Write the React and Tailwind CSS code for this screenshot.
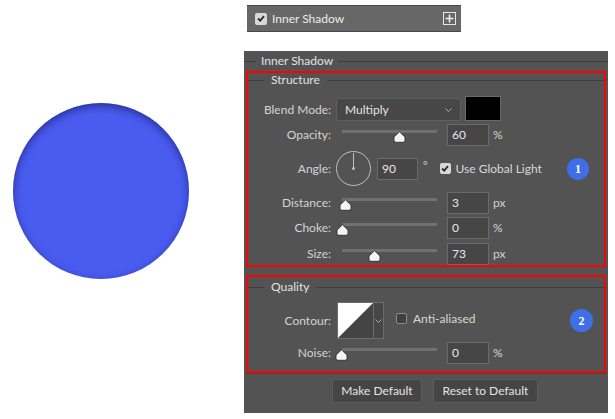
import React from 'react';

const FONT = { fontFamily: 'Lato, "Noto Sans", sans-serif' };

function Legend({ text, lead = 'w-[12px]', pad = 'px-[5px]' }) {
  return (
    <div className="flex items-center h-[14px]">
      <div className={`${lead} h-px bg-[#3d3d3d]`} />
      <span className={`${pad} text-[12px] leading-[14px] text-[#e2e2e2]`}>{text}</span>
      <div className="flex-1 h-px bg-[#3d3d3d]" />
    </div>
  );
}

function Label({ children }) {
  return (
    <div className="w-[83px] shrink-0 text-right text-[12px] leading-[14px] text-[#d4d4d4]">{children}</div>
  );
}

function Thumb() {
  return (
    <svg width="13" height="12" viewBox="0 0 13 12">
      <path d="M6.5 0.8 L12 6 L12 9.5 Q12 11.3 10 11.3 L3 11.3 Q1 11.3 1 9.5 L1 6 Z" fill="#f4f4f4" stroke="#2e2e2e" strokeWidth="0.9" />
    </svg>
  );
}

function Slider({ left }) {
  return (
    <div className="relative w-[107px] h-[22px] shrink-0">
      <div className="absolute left-[6px] top-[6px] w-[95px] h-[3px] bg-[#707070]" />
      <div className="absolute top-[7px]" style={{ left }}>
        <Thumb />
      </div>
    </div>
  );
}

function NumInput({ value, w = 'w-[42px]' }) {
  return (
    <div className={`${w} h-[22px] shrink-0 bg-[#464646] border border-[#6a6a6a] px-[4px] text-[12px] leading-[20px] text-[#e8e8e8]`}>
      {value}
    </div>
  );
}

function SliderRow({ label, value, unit, left, mt }) {
  return (
    <div className={`flex items-center h-[22px] ${mt}`}>
      <Label>{label}</Label>
      <div className="ml-[5px]">
        <Slider left={left} />
      </div>
      <div className="ml-[4px]">
        <NumInput value={value} />
      </div>
      <span className="ml-[4px] text-[12px] text-[#d4d4d4]">{unit}</span>
    </div>
  );
}

function Check({ checked, size = 'w-[11px] h-[11px]' }) {
  if (!checked) {
    return <div className={`${size} shrink-0 rounded-[2px] bg-[#3f3f3f] border border-[#8c8c8c]`} />;
  }
  return (
    <div className={`${size} shrink-0 rounded-[2px] bg-[#d8d8d8] flex items-center justify-center`}>
      <svg width="8" height="7" viewBox="0 0 8 7">
        <path d="M1 3.5 L3.2 5.6 L7 1.2" fill="none" stroke="#2a2a2a" strokeWidth="1.8" />
      </svg>
    </div>
  );
}

function Chevron() {
  return (
    <svg width="7" height="4" viewBox="0 0 7 4">
      <path d="M0.5 0.5 L3.5 3.5 L6.5 0.5" fill="none" stroke="#b0b0b0" strokeWidth="1" />
    </svg>
  );
}

function Badge({ n, size = 'w-[22px] h-[22px]', mr }) {
  return (
    <div className={`${size} ${mr} shrink-0 rounded-full bg-[#3f6ee9] flex items-center justify-center text-white text-[12px] font-bold`} style={{ fontFamily: '"Liberation Serif", serif' }}>
      {n}
    </div>
  );
}

export default function App() {
  return (
    <div className="w-[615px] h-[419px] bg-white flex overflow-hidden" style={FONT}>
      {/* preview */}
      <div className="w-[244px] shrink-0 pl-[13px] pt-[103px]">
        <div className="w-[176px] h-[176px] rounded-full bg-[#4a5cf0] shadow-[inset_0_3px_9px_rgba(10,15,80,0.55)]" />
      </div>

      {/* layer style panel */}
      <div className="flex flex-col pt-[5px]">
        <div className="ml-[3px] w-[214px] h-[27px] bg-[#676767] border-t border-b border-[#484848] flex items-center">
          <div className="ml-[8px]">
            <Check checked size="w-[12px] h-[12px]" />
          </div>
          <span className="ml-[5px] text-[12px] text-[#ececec]">Inner Shadow</span>
          <div className="ml-auto mr-[5px] w-[13px] h-[13px] border border-[#e6e6e6] flex items-center justify-center">
            <svg width="9" height="9" viewBox="0 0 9 9">
              <path d="M4.5 0.5 V8.5 M0.5 4.5 H8.5" stroke="#f0f0f0" strokeWidth="1.6" />
            </svg>
          </div>
        </div>

        <div className="mt-[19px] w-[364px] h-[362px] bg-[#535353] flex flex-col">
          <div className="mt-[3px]">
            <Legend text="Inner Shadow" />
          </div>

          {/* Structure */}
          <div className="mt-[3px] mx-[2px] h-[196px] border-2 border-[#ff0000] flex flex-col">
            <Legend text="Structure" lead="w-[16px]" pad="px-[7px]" />

            <div className="flex items-end h-[25px] mt-[9px]">
              <div className="self-center mt-[3px]">
                <Label>Blend Mode:</Label>
              </div>
              <div className="ml-[5px] w-[125px] h-[23px] rounded-[3px] bg-[#474747] border border-[#5f5f5f] flex items-center px-[8px]">
                <span className="text-[12px] text-[#e4e4e4]">Multiply</span>
                <div className="ml-auto">
                  <Chevron />
                </div>
              </div>
              <div className="ml-[4px] w-[36px] h-[25px] bg-black border border-[#6a6a6a]" />
            </div>

            <SliderRow label="Opacity:" value="60" unit="%" left={57} mt="mt-[3px]" />

            <div className="flex items-center h-[35px] mt-[5px]">
              <Label>Angle:</Label>
              <div className="ml-[5px] relative w-[35px] h-[35px] shrink-0 rounded-full border border-[#bdbdbd]">
                <div className="absolute left-[16px] top-[1px] w-px h-[16px] bg-[#bdbdbd]" />
                <div className="absolute left-[15px] top-[15px] w-[3px] h-[3px] rounded-full bg-[#bdbdbd]" />
              </div>
              <div className="ml-[6px]">
                <NumInput value="90" w="w-[41px]" />
              </div>
              <span className="ml-[5px] self-start mt-[9px] text-[11px] leading-[11px] text-[#d4d4d4]">°</span>
              <div className="ml-[12px]">
                <Check checked />
              </div>
              <span className="ml-[5px] text-[12px] text-[#d8d8d8]">Use Global Light</span>
              <div className="flex-1" />
              <Badge n="1" mr="mr-[15px]" />
            </div>

            <SliderRow label="Distance:" value="3" unit="px" left={3} mt="mt-[6px]" />
            <SliderRow label="Choke:" value="0" unit="%" left={0} mt="mt-[3px]" />
            <SliderRow label="Size:" value="73" unit="px" left={32} mt="mt-[4px]" />
          </div>

          {/* Quality */}
          <div className="mt-[8px] mx-[2px] h-[98px] border-2 border-[#ff0000] flex flex-col">
            <div className="mt-[3px]">
              <Legend text="Quality" lead="w-[16px]" pad="px-[7px]" />
            </div>

            <div className="flex items-center h-[37px] mt-[8px]">
              <Label>Contour:</Label>
              <div className="ml-[6px] h-[37px] flex border border-[#6c6c6c] bg-[#474747]">
                <svg width="35" height="35" viewBox="0 0 35 35" className="block">
                  <rect width="35" height="35" fill="#444444" />
                  <path d="M0 0 H35 L0 35 Z" fill="#ffffff" />
                </svg>
                <div className="w-[10px] border-l border-[#6c6c6c] flex items-center justify-center">
                  <Chevron />
                </div>
              </div>
              <div className="ml-[12px] -mt-[4px]">
                <Check />
              </div>
              <span className="ml-[6px] -mt-[4px] text-[12px] text-[#d8d8d8]">Anti-aliased</span>
              <div className="flex-1" />
              <Badge n="2" size="w-[23px] h-[23px]" mr="mr-[11px]" />
            </div>

            <SliderRow label="Noise:" value="0" unit="%" left={-1} mt="mt-[3px]" />
          </div>
          <div className="mx-[2px] h-px bg-[#454545]" />

          <div className="mt-[5px] ml-[88px] flex gap-[11px]">
            <div className="w-[90px] h-[24px] rounded-[3px] bg-[#454545] border border-[#5c5c5c] flex items-center justify-center text-[12px] text-[#e4e4e4]">
              Make Default
            </div>
            <div className="w-[105px] h-[24px] rounded-[3px] bg-[#454545] border border-[#5c5c5c] flex items-center justify-center text-[12px] text-[#e4e4e4]">
              Reset to Default
            </div>
          </div>
        </div>
      </div>
    </div>
  );
}
